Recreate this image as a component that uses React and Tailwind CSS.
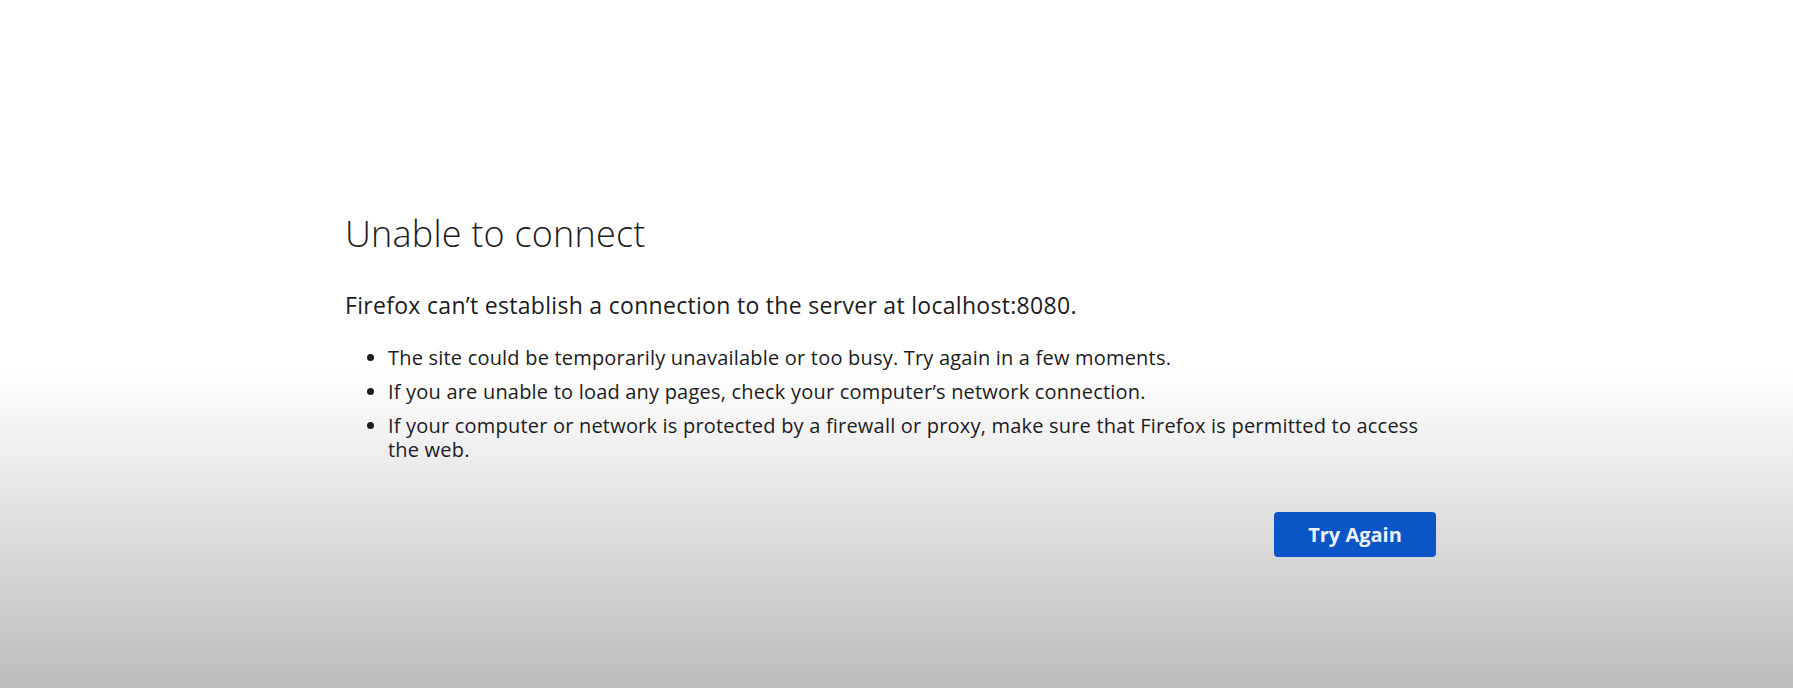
import React from 'react';

const reasons = [
  'The site could be temporarily unavailable or too busy. Try again in a few moments.',
  'If you are unable to load any pages, check your computer’s network connection.',
  'If your computer or network is protected by a firewall or proxy, make sure that Firefox is permitted to access the web.',
];

const App = () => {
  return (
    <div className="min-h-screen w-full bg-[linear-gradient(to_bottom,#ffffff_0%,#ffffff_54%,#bcbcbc_100%)] font-['Open_Sans','Lato',sans-serif] text-[#1c1b22]">
      <div className="ml-[345px] w-[1091px] pt-[216px]">
        {/* Title */}
        <h1 className="text-[36px] leading-[36px] font-light tracking-[0.2px]">Unable to connect</h1>

        {/* Description */}
        <p className="mt-[39px] text-[23px] leading-[28px] tracking-[0.3px]">
          Firefox can’t establish a connection to the server at localhost:8080.
        </p>

        {/* Reasons */}
        <ul className="mt-[27px] list-disc pl-[43px] text-[20px] leading-[24px] tracking-[0.2px]">
          {reasons.map((r) => (
            <li key={r} className="mb-[10px] pr-[12px]">
              {r}
            </li>
          ))}
        </ul>

        {/* Action */}
        <div className="mt-[50px] flex justify-end">
          <button className="h-[45px] w-[162px] rounded-[4px] bg-[#0a56c6] text-[20px] font-bold text-[#eef2fa]">
            Try Again
          </button>
        </div>
      </div>
    </div>
  );
};

export default App;
